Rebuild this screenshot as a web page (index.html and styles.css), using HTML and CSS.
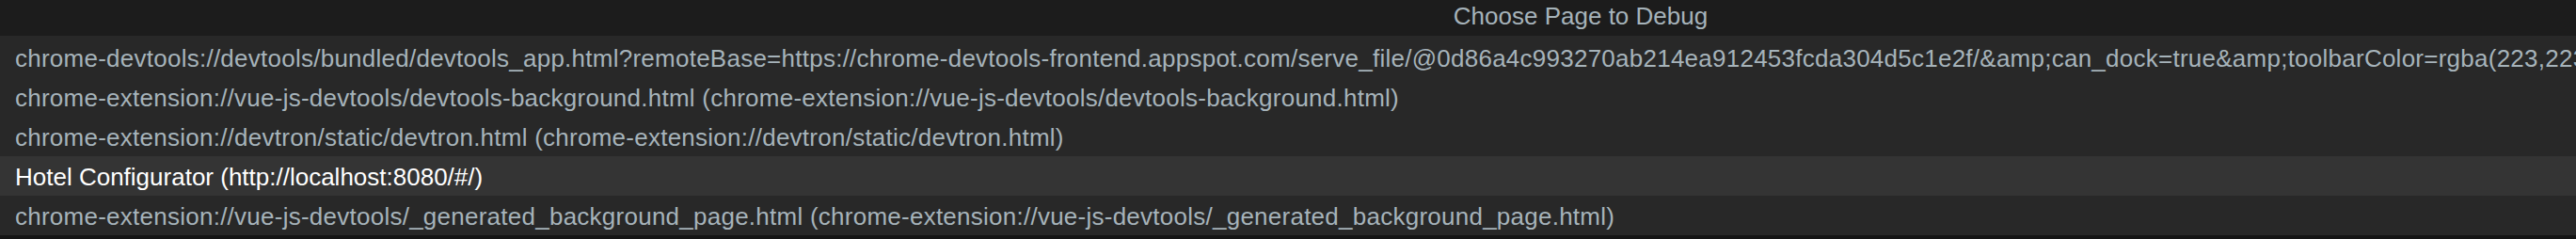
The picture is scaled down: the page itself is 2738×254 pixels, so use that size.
FILE: index.html
```html
<!DOCTYPE html>
<html lang="en">
<head>
    <meta charset="UTF-8">
    <title>Choose Page to Debug</title>
    <link rel="stylesheet" href="styles.css">
</head>
<body>
    <div class="picker">
        <div class="picker-header">
            <h1>Choose Page to Debug</h1>
        </div>

        <ul class="page-list">
            <li class="page-item">chrome-devtools://devtools/bundled/devtools_app.html?remoteBase=https://chrome-devtools-frontend.appspot.com/serve_file/@0d86a4c993270ab214ea912453fcda304d5c1e2f/&amp;amp;can_dock=true&amp;amp;toolbarColor=rgba(223,223,223,1)&amp;amp;textColor=rgba(0,0,0,1)&amp;amp;experiments=true</li>
            <li class="page-item">chrome-extension://vue-js-devtools/devtools-background.html (chrome-extension://vue-js-devtools/devtools-background.html)</li>
            <li class="page-item">chrome-extension://devtron/static/devtron.html (chrome-extension://devtron/static/devtron.html)</li>
            <li class="page-item active">Hotel Configurator (http://localhost:8080/#/)</li>
            <li class="page-item">chrome-extension://vue-js-devtools/_generated_background_page.html (chrome-extension://vue-js-devtools/_generated_background_page.html)</li>
        </ul>
    </div>
</body>
</html>
```

FILE: styles.css
```css
* {
    margin: 0;
    padding: 0;
    box-sizing: border-box;
    font-family: 'Liberation Sans', Arial, sans-serif;
}

body {
    background: #151515;
    width: 2738px;
    height: 254px;
    overflow: hidden;
}

.picker {
    background-color: #282828;
    border-bottom: 2px solid #151515;
}

.picker-header {
    height: 38px;
    background-color: #1c1c1c;
    padding-left: 622px;
}

.picker-header h1 {
    text-align: center;
    font-size: 26px;
    font-weight: normal;
    line-height: 35px;
    color: #a6b3ba;
    white-space: nowrap;
}

.page-list {
    list-style: none;
    padding-top: 2px;
}

.page-item {
    height: 42px;
    line-height: 40px;
    padding: 2px 0 0 16px;
    font-size: 26px;
    letter-spacing: 0.25px;
    color: #a6b3ba;
    white-space: nowrap;
    overflow: hidden;
}

.page-item.active {
    background-color: #343434;
    color: #ffffff;
    letter-spacing: 0;
}
```
